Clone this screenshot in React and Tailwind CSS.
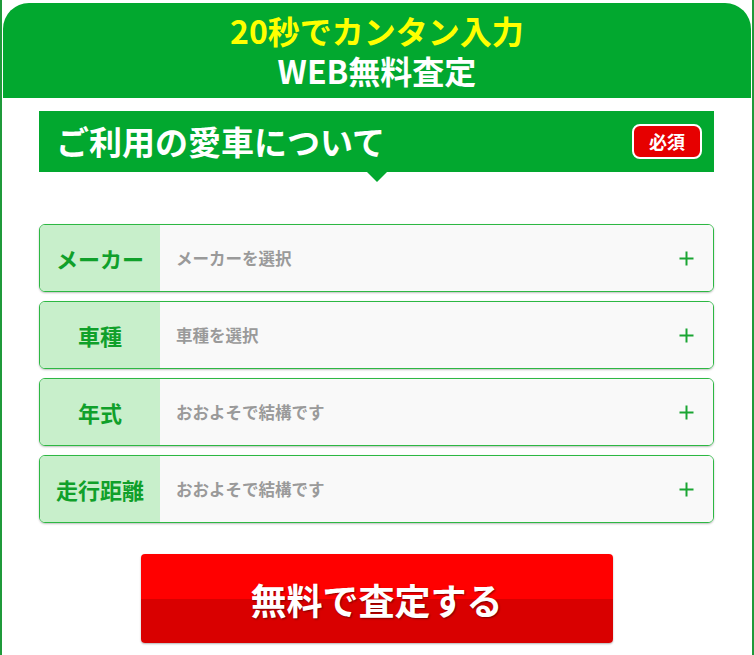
import React from "react";

const font = { fontFamily: '"Noto Sans CJK JP", "Noto Sans", sans-serif' };

function Plus() {
  return (
    <svg width="15" height="15" viewBox="0 0 15 15" className="shrink-0">
      <path d="M7.5 0.5V14.5M0.5 7.5H14.5" stroke="#1aa533" strokeWidth="2" fill="none" />
    </svg>
  );
}

function Row({ label, placeholder }) {
  return (
    <div className="flex h-[68px] rounded-[6px] border border-[#2db843] overflow-hidden shadow-[0_1px_2px_rgba(0,0,0,0.25)]">
      <div className="w-[120px] shrink-0 bg-[#c8efcb] flex items-center justify-center text-[22px] font-bold text-[#10a02a]">
        {label}
      </div>
      <div className="flex-1 bg-[#f9f9f9] flex items-center justify-between pl-[16px] pr-[19px]">
        <span className="text-[16.5px] font-bold text-[#9a9a9a]">{placeholder}</span>
        <Plus />
      </div>
    </div>
  );
}

export default function App() {
  return (
    <div style={font} className="w-[754px] bg-white">
      <div className="border-x-[2px] border-[#1f9a3a] px-[1px] pt-[3px] pb-[30px]">
        <div className="h-[95px] bg-[#02a82f] rounded-t-[26px] flex flex-col items-center justify-center gap-[4px]">
          <div className="text-[32px] leading-[36px] font-bold text-[#ffff00] -mt-[2px]">20秒でカンタン入力</div>
          <div className="text-[32px] leading-[36px] font-bold text-white">WEB無料査定</div>
        </div>
        <div className="pl-[36px] pr-[37px] pt-[13px]">
          <div className="relative h-[61px] bg-[#02a82f] flex items-center justify-between pl-[17px] pr-[12px]">
            <div className="text-[33px] font-bold text-white leading-none">ご利用の愛車について</div>
            <div className="h-[35px] w-[70px] rounded-[8px] border-[2px] border-white bg-[#e60000] flex items-center justify-center text-[18px] font-bold text-white">
              必須
            </div>
            <div className="absolute left-1/2 -translate-x-1/2 top-full w-0 h-0 border-l-[10px] border-r-[10px] border-t-[10px] border-l-transparent border-r-transparent border-t-[#02a82f]" />
          </div>
          <div className="mt-[52px] flex flex-col gap-[9px]">
            <Row label="メーカー" placeholder="メーカーを選択" />
            <Row label="車種" placeholder="車種を選択" />
            <Row label="年式" placeholder="おおよそで結構です" />
            <Row label="走行距離" placeholder="おおよそで結構です" />
          </div>
          <div className="mt-[31px] flex justify-center">
            <div className="relative w-[472px] h-[89px] rounded-[4px] overflow-hidden shadow-[0_1px_2px_rgba(0,0,0,0.3)] flex flex-col">
              <div className="h-[45px] bg-[#ff0000]" />
              <div className="flex-1 bg-[#d90000]" />
              <div className="absolute inset-0 flex items-center justify-center text-[36px] font-bold text-white [text-shadow:1px_1px_2px_rgba(0,0,0,0.45)]">
                無料で査定する
              </div>
            </div>
          </div>
        </div>
      </div>
    </div>
  );
}
